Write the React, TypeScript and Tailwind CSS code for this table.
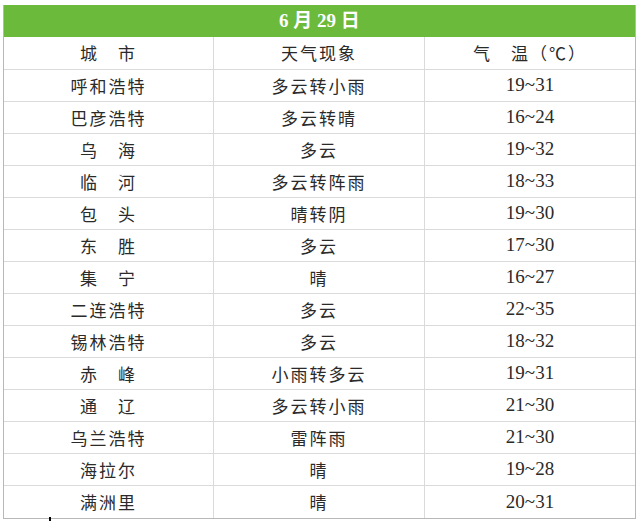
import React from "react";

const rows: [string, string, string][] = [
  ["呼和浩特", "多云转小雨", "19~31"],
  ["巴彦浩特", "多云转晴", "16~24"],
  ["乌　海", "多云", "19~32"],
  ["临　河", "多云转阵雨", "18~33"],
  ["包　头", "晴转阴", "19~30"],
  ["东　胜", "多云", "17~30"],
  ["集　宁", "晴", "16~27"],
  ["二连浩特", "多云", "22~35"],
  ["锡林浩特", "多云", "18~32"],
  ["赤　峰", "小雨转多云", "19~31"],
  ["通　辽", "多云转小雨", "21~30"],
  ["乌兰浩特", "雷阵雨", "21~30"],
  ["海拉尔", "晴", "19~28"],
  ["满洲里", "晴", "20~31"],
];

const cjk = "font-['Noto_Sans_CJK_SC',sans-serif] text-[17px] tracking-[2px]";
const serif = "font-['Liberation_Serif','Noto_Sans_CJK_SC',serif]";

export default function App() {
  return (
    <div lang="zh-CN" className="w-[640px] h-[521px] bg-white relative overflow-hidden">
      <div className="pt-[5px] pl-[3px] w-[636px]">
        <div className="border border-[#b8b8b8] border-t-0">
          <div
            className={`h-[32px] bg-[#6cba3b] flex items-center justify-center text-white font-bold text-[19px] ${serif}`}
          >
            6 月 29 日
          </div>
          <div className={`grid grid-cols-[210px_211px_1fr] h-[33px] border-b border-[#dadada] text-[#2a2a2a] ${cjk}`}>
            <div className="flex items-center justify-center border-r border-[#dadada]">城　市</div>
            <div className="flex items-center justify-center border-r border-[#dadada]">天气现象</div>
            <div className="flex items-center justify-center">气　温（℃）</div>
          </div>
          {rows.map((r, i) => (
            <div
              key={i}
              className={`grid grid-cols-[210px_211px_1fr] h-[32px] ${i < rows.length - 1 ? "border-b border-[#dadada]" : ""} text-[#2a2a2a]`}
            >
              <div className={`flex items-center justify-center border-r border-[#dadada] ${cjk}`}>{r[0]}</div>
              <div className={`flex items-center justify-center border-r border-[#dadada] ${cjk}`}>{r[1]}</div>
              <div className={`flex items-center justify-center text-[19px] ${serif}`}>{r[2]}</div>
            </div>
          ))}
        </div>
      </div>
      <div className="absolute left-[49px] top-[517px] w-[2px] h-[4px] bg-black" />
    </div>
  );
}
